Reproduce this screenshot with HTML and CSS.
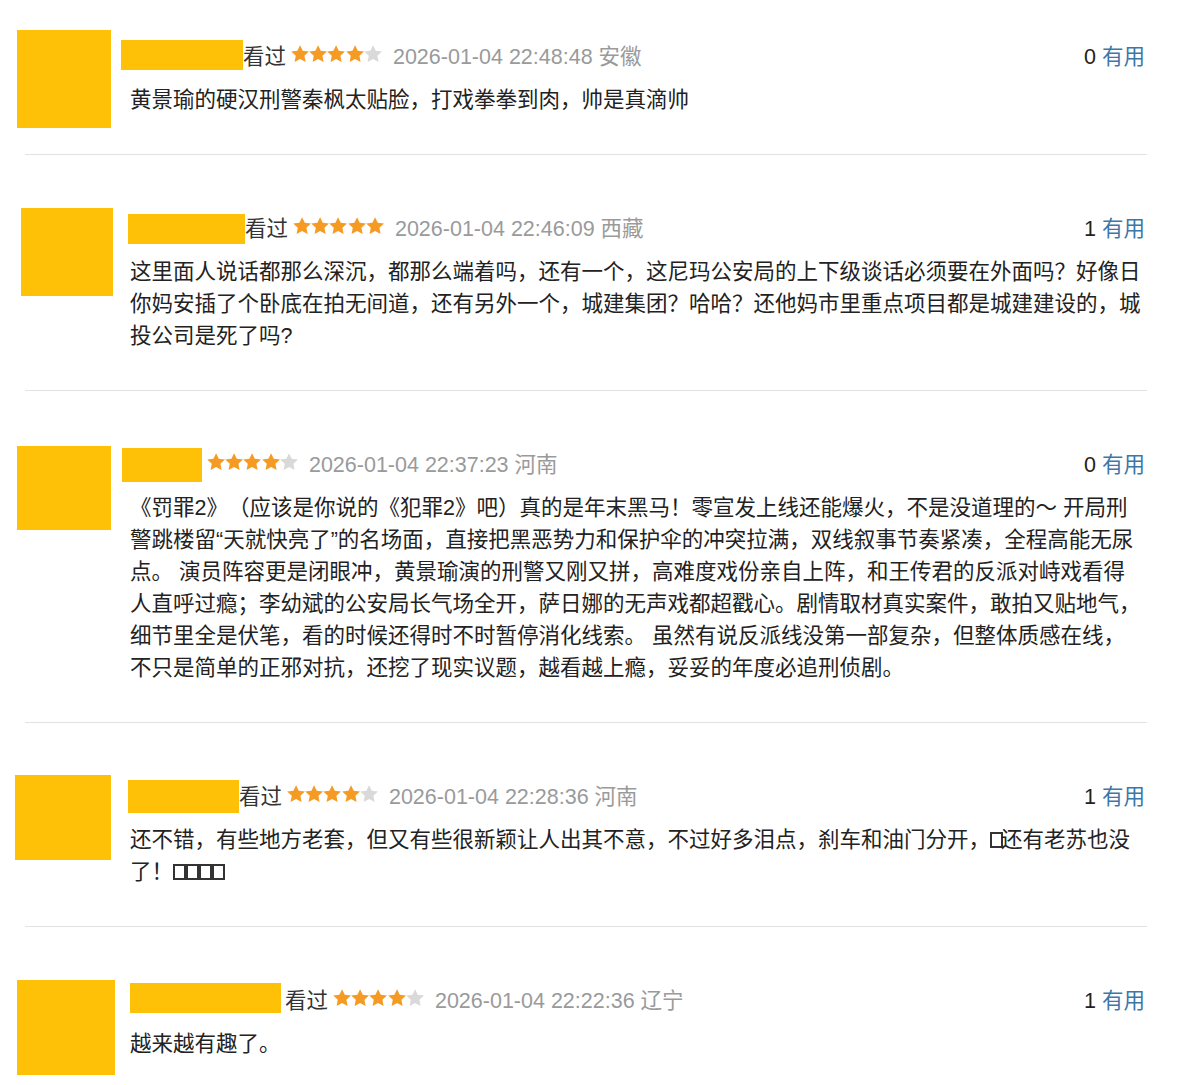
FILE: index.html
```html
<!DOCTYPE html>
<html lang="zh-CN">
<head>
<meta charset="utf-8">
<title>短评</title>
<link rel="stylesheet" href="styles.css">
</head>
<body>
<main class="comments">

  <article class="comment">
    <div class="avatar avatar--a"></div>
    <div class="body">
      <div class="meta">
        <span class="name name--a"></span>
        <span class="status">看过</span>
        <span class="stars">
          <svg class="star on" viewBox="2 2 20 20"><path d="M12 2.2l2.95 6.2 6.8.85-5 4.7 1.3 6.75L12 17.4l-6.05 3.3 1.3-6.75-5-4.7 6.8-.85z"/></svg><svg class="star on" viewBox="2 2 20 20"><path d="M12 2.2l2.95 6.2 6.8.85-5 4.7 1.3 6.75L12 17.4l-6.05 3.3 1.3-6.75-5-4.7 6.8-.85z"/></svg><svg class="star on" viewBox="2 2 20 20"><path d="M12 2.2l2.95 6.2 6.8.85-5 4.7 1.3 6.75L12 17.4l-6.05 3.3 1.3-6.75-5-4.7 6.8-.85z"/></svg><svg class="star on" viewBox="2 2 20 20"><path d="M12 2.2l2.95 6.2 6.8.85-5 4.7 1.3 6.75L12 17.4l-6.05 3.3 1.3-6.75-5-4.7 6.8-.85z"/></svg><svg class="star off" viewBox="2 2 20 20"><path d="M12 2.2l2.95 6.2 6.8.85-5 4.7 1.3 6.75L12 17.4l-6.05 3.3 1.3-6.75-5-4.7 6.8-.85z"/></svg>
        </span>
        <span class="time">2026-01-04 22:48:48 安徽</span>
        <span class="votes"><span class="count">0</span> <a class="useful">有用</a></span>
      </div>
      <p class="text">黄景瑜的硬汉刑警秦枫太贴脸，打戏拳拳到肉，帅是真滴帅</p>
    </div>
  </article>
  <hr class="sep">

  <article class="comment">
    <div class="avatar avatar--b"></div>
    <div class="body">
      <div class="meta">
        <span class="name name--b"></span>
        <span class="status">看过</span>
        <span class="stars">
          <svg class="star on" viewBox="2 2 20 20"><path d="M12 2.2l2.95 6.2 6.8.85-5 4.7 1.3 6.75L12 17.4l-6.05 3.3 1.3-6.75-5-4.7 6.8-.85z"/></svg><svg class="star on" viewBox="2 2 20 20"><path d="M12 2.2l2.95 6.2 6.8.85-5 4.7 1.3 6.75L12 17.4l-6.05 3.3 1.3-6.75-5-4.7 6.8-.85z"/></svg><svg class="star on" viewBox="2 2 20 20"><path d="M12 2.2l2.95 6.2 6.8.85-5 4.7 1.3 6.75L12 17.4l-6.05 3.3 1.3-6.75-5-4.7 6.8-.85z"/></svg><svg class="star on" viewBox="2 2 20 20"><path d="M12 2.2l2.95 6.2 6.8.85-5 4.7 1.3 6.75L12 17.4l-6.05 3.3 1.3-6.75-5-4.7 6.8-.85z"/></svg><svg class="star on" viewBox="2 2 20 20"><path d="M12 2.2l2.95 6.2 6.8.85-5 4.7 1.3 6.75L12 17.4l-6.05 3.3 1.3-6.75-5-4.7 6.8-.85z"/></svg>
        </span>
        <span class="time">2026-01-04 22:46:09 西藏</span>
        <span class="votes"><span class="count">1</span> <a class="useful">有用</a></span>
      </div>
      <p class="text">这里面人说话都那么深沉，都那么端着吗，还有一个，这尼玛公安局的上下级谈话必须要在外面吗？好像日你妈安插了个卧底在拍无间道，还有另外一个，城建集团？哈哈？还他妈市里重点项目都是城建建设的，城投公司是死了吗?</p>
    </div>
  </article>
  <hr class="sep">

  <article class="comment">
    <div class="avatar avatar--c"></div>
    <div class="body">
      <div class="meta">
        <span class="name name--c"></span>
        <span class="stars">
          <svg class="star on" viewBox="2 2 20 20"><path d="M12 2.2l2.95 6.2 6.8.85-5 4.7 1.3 6.75L12 17.4l-6.05 3.3 1.3-6.75-5-4.7 6.8-.85z"/></svg><svg class="star on" viewBox="2 2 20 20"><path d="M12 2.2l2.95 6.2 6.8.85-5 4.7 1.3 6.75L12 17.4l-6.05 3.3 1.3-6.75-5-4.7 6.8-.85z"/></svg><svg class="star on" viewBox="2 2 20 20"><path d="M12 2.2l2.95 6.2 6.8.85-5 4.7 1.3 6.75L12 17.4l-6.05 3.3 1.3-6.75-5-4.7 6.8-.85z"/></svg><svg class="star on" viewBox="2 2 20 20"><path d="M12 2.2l2.95 6.2 6.8.85-5 4.7 1.3 6.75L12 17.4l-6.05 3.3 1.3-6.75-5-4.7 6.8-.85z"/></svg><svg class="star off" viewBox="2 2 20 20"><path d="M12 2.2l2.95 6.2 6.8.85-5 4.7 1.3 6.75L12 17.4l-6.05 3.3 1.3-6.75-5-4.7 6.8-.85z"/></svg>
        </span>
        <span class="time">2026-01-04 22:37:23 河南</span>
        <span class="votes"><span class="count">0</span> <a class="useful">有用</a></span>
      </div>
      <p class="text">《罚罪2》（应该是你说的《犯罪2》吧）真的是年末黑马！零宣发上线还能爆火，不是没道理的～ 开局刑警跳楼留“天就快亮了”的名场面，直接把黑恶势力和保护伞的冲突拉满，双线叙事节奏紧凑，全程高能无尿点。 演员阵容更是闭眼冲，黄景瑜演的刑警又刚又拼，高难度戏份亲自上阵，和王传君的反派对峙戏看得人直呼过瘾；李幼斌的公安局长气场全开，萨日娜的无声戏都超戳心。剧情取材真实案件，敢拍又贴地气，细节里全是伏笔，看的时候还得时不时暂停消化线索。 虽然有说反派线没第一部复杂，但整体质感在线，不只是简单的正邪对抗，还挖了现实议题，越看越上瘾，妥妥的年度必追刑侦剧。</p>
    </div>
  </article>
  <hr class="sep">

  <article class="comment">
    <div class="avatar avatar--d"></div>
    <div class="body">
      <div class="meta">
        <span class="name name--d"></span>
        <span class="status">看过</span>
        <span class="stars">
          <svg class="star on" viewBox="2 2 20 20"><path d="M12 2.2l2.95 6.2 6.8.85-5 4.7 1.3 6.75L12 17.4l-6.05 3.3 1.3-6.75-5-4.7 6.8-.85z"/></svg><svg class="star on" viewBox="2 2 20 20"><path d="M12 2.2l2.95 6.2 6.8.85-5 4.7 1.3 6.75L12 17.4l-6.05 3.3 1.3-6.75-5-4.7 6.8-.85z"/></svg><svg class="star on" viewBox="2 2 20 20"><path d="M12 2.2l2.95 6.2 6.8.85-5 4.7 1.3 6.75L12 17.4l-6.05 3.3 1.3-6.75-5-4.7 6.8-.85z"/></svg><svg class="star on" viewBox="2 2 20 20"><path d="M12 2.2l2.95 6.2 6.8.85-5 4.7 1.3 6.75L12 17.4l-6.05 3.3 1.3-6.75-5-4.7 6.8-.85z"/></svg><svg class="star off" viewBox="2 2 20 20"><path d="M12 2.2l2.95 6.2 6.8.85-5 4.7 1.3 6.75L12 17.4l-6.05 3.3 1.3-6.75-5-4.7 6.8-.85z"/></svg>
        </span>
        <span class="time">2026-01-04 22:28:36 河南</span>
        <span class="votes"><span class="count">1</span> <a class="useful">有用</a></span>
      </div>
      <p class="text">还不错，有些地方老套，但又有些很新颖让人出其不意，不过好多泪点，刹车和油门分开，<span class="tofu tofu--tight"></span><span>还有老苏也没</span><span>了！</span><span class="tofu"></span><span class="tofu"></span><span class="tofu"></span><span class="tofu"></span></p>
    </div>
  </article>
  <hr class="sep">

  <article class="comment">
    <div class="avatar avatar--e"></div>
    <div class="body">
      <div class="meta">
        <span class="name name--e"></span>
        <span class="status">看过</span>
        <span class="stars">
          <svg class="star on" viewBox="2 2 20 20"><path d="M12 2.2l2.95 6.2 6.8.85-5 4.7 1.3 6.75L12 17.4l-6.05 3.3 1.3-6.75-5-4.7 6.8-.85z"/></svg><svg class="star on" viewBox="2 2 20 20"><path d="M12 2.2l2.95 6.2 6.8.85-5 4.7 1.3 6.75L12 17.4l-6.05 3.3 1.3-6.75-5-4.7 6.8-.85z"/></svg><svg class="star on" viewBox="2 2 20 20"><path d="M12 2.2l2.95 6.2 6.8.85-5 4.7 1.3 6.75L12 17.4l-6.05 3.3 1.3-6.75-5-4.7 6.8-.85z"/></svg><svg class="star on" viewBox="2 2 20 20"><path d="M12 2.2l2.95 6.2 6.8.85-5 4.7 1.3 6.75L12 17.4l-6.05 3.3 1.3-6.75-5-4.7 6.8-.85z"/></svg><svg class="star off" viewBox="2 2 20 20"><path d="M12 2.2l2.95 6.2 6.8.85-5 4.7 1.3 6.75L12 17.4l-6.05 3.3 1.3-6.75-5-4.7 6.8-.85z"/></svg>
        </span>
        <span class="time">2026-01-04 22:22:36 辽宁</span>
        <span class="votes"><span class="count">1</span> <a class="useful">有用</a></span>
      </div>
      <p class="text">越来越有趣了。</p>
    </div>
  </article>

</main>
</body>
</html>
```

FILE: styles.css
```css
html, body {
  margin: 0;
  padding: 0;
  background: #ffffff;
}

body {
  font-family: "Liberation Sans", "Noto Sans CJK SC", sans-serif;
  color: #222222;
  overflow: hidden;
  text-spacing-trim: space-all;
}

.comments {
  width: 1200px;
  padding-top: 38px;
}

.comment {
  display: grid;
  grid-template-columns: 130px 1015px;
  align-items: start;
  padding-bottom: 38px;
}

.sep {
  border: 0;
  height: 1px;
  background: #e2e2e2;
  margin: 0 53px 55px 25px;
}

/* redacted avatar blocks */
.avatar {
  background: #fec107;
  margin-bottom: -120px;
}
.avatar--a { width: 94px; height: 98px; margin-left: 17px; margin-top: -8px; }
.avatar--b { width: 92px; height: 88px; margin-left: 21px; margin-top: -2px; }
.avatar--c { width: 94px; height: 84px; margin-left: 17px; margin-top: 0; }
.avatar--d { width: 96px; height: 85px; margin-left: 15px; margin-top: -3px; }
.avatar--e { width: 98px; height: 95px; margin-left: 17px; margin-top: -2px; }

.body {
  min-width: 0;
}

.meta {
  display: flex;
  align-items: center;
  height: 32px;
  font-size: 21.5px;
  white-space: nowrap;
}

/* redacted user-name blocks */
.name {
  display: block;
  flex: none;
  background: #fec107;
}
.name--a { width: 122px; height: 30px; margin-left: -9px; margin-top: 2px; }
.name--b { width: 117px; height: 30px; margin-left: -2px; margin-top: 6px; }
.name--c { width: 80px; height: 34px; margin-left: -8px; margin-top: 6px; margin-right: 5px; }
.name--d { width: 111px; height: 33px; margin-left: -2px; margin-top: 5px; }
.name--e { width: 151px; height: 30px; margin-left: 0; margin-right: 4px; }

.status {
  color: #333333;
  margin-right: 5px;
}

.stars {
  display: flex;
  align-items: center;
  margin-right: 11px;
}

.star {
  width: 18.2px;
  height: 18.2px;
  display: block;
}
.star.on path { fill: #f59a23; }
.star.off path { fill: #d9d9d9; }

.time {
  color: #9a9a9a;
}

.votes {
  margin-left: auto;
  color: #222222;
}

.count {
  color: #222222;
}

.useful {
  color: #3b77a9;
  text-decoration: none;
}

.text {
  margin: 14px 0 0;
  font-size: 21.5px;
  line-height: 32px;
  color: #222222;
}

/* missing-glyph boxes as shown in the original */
.tofu {
  display: inline-block;
  width: 9px;
  height: 12px;
  border: 2px solid #333333;
  vertical-align: -1px;
}
.tofu--tight {
  margin-right: -2px;
}
```
